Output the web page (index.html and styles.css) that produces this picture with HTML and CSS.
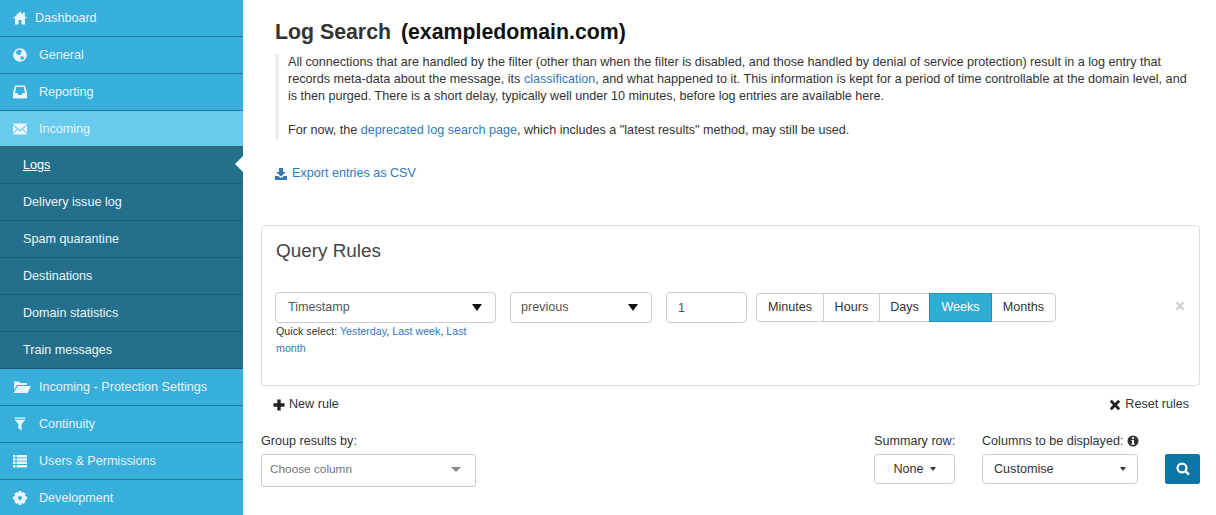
FILE: index.html
```html
<!DOCTYPE html>
<html lang="en">
<head>
    <meta charset="UTF-8">
    <meta name="viewport" content="width=device-width, initial-scale=1.0">
    <title>Log Search</title>
    <link rel="stylesheet" href="styles.css">
</head>
<body>
    <div class="page">
        <nav class="sidebar">
            <a class="nav-item nav-first" href="#">
                <svg class="nav-icon" viewBox="0 0 14 14"><path d="M7 .5 L0 7.200 L2 7.200 L2 13.500 L5.500 13.500 L5.500 9 L8.500 9 L8.500 13.500 L12 13.500 L12 7.200 L14 7.200 L11.800 5 L11.800 1.500 L10 1.500 L10 3.400 Z"/></svg>
                Dashboard
            </a>
            <a class="nav-item" href="#">
                <svg class="nav-icon" viewBox="0 0 14 14"><path fill-rule="evenodd" d="M7 .2a6.800 6.800 0 1 0 0 13.600 6.800 6.800 0 0 0 0-13.600zM4.500 2.200 L7.500 1.800 L9 3.200 L7.500 4.500 L8 6 L6 7.200 L4 6.200 L2.500 4.500 Z M7.500 8.200 L10.500 8.700 L11.500 10 L9.500 12 L7.500 11 Z"/></svg>
                General
            </a>
            <a class="nav-item" href="#">
                <svg class="nav-icon" viewBox="0 0 14 14"><path fill-rule="evenodd" d="M3 .5 L11 .5 C12 .5 12.300 1 12.500 1.700 L14 8 L14 12.500 C14 13.200 13.500 13.500 13 13.500 L1 13.500 C.5 13.500 0 13.200 0 12.500 L0 8 L1.500 1.700 C1.700 1 2 .5 3 .5 Z M3.200 2 L2 8 L4.500 8 L5.500 10 L8.500 10 L9.500 8 L12 8 L10.800 2 Z"/></svg>
                Reporting
            </a>
            <a class="nav-item nav-open" href="#">
                <svg class="nav-icon" viewBox="0 0 14 14"><path d="M0 1.500 L14 1.500 L14 2.200 L7 8 L0 2.200 Z M0 3.500 L0 11 L4 6.800 Z M14 3.500 L14 11 L10 6.800 Z M0 12.500 L0 12 L4.800 7.600 L7 9.500 L9.200 7.600 L14 12 L14 12.500 Z"/></svg>
                Incoming
            </a>
            <div class="subnav">
                <a class="sub-item sub-current" href="#">Logs</a>
                <a class="sub-item" href="#">Delivery issue log</a>
                <a class="sub-item" href="#">Spam quarantine</a>
                <a class="sub-item" href="#">Destinations</a>
                <a class="sub-item" href="#">Domain statistics</a>
                <a class="sub-item" href="#">Train messages</a>
            </div>
            <a class="nav-item" href="#">
                <svg class="nav-icon nav-icon-wide" viewBox="0 0 18 14"><path d="M1 1.500 L6 1.500 L7 3 L14 3 L14 5 L4 5 L1 10 Z M4.800 6 L18 6 L14.500 13 L0.500 13 Z"/></svg>
                Incoming - Protection Settings
            </a>
            <a class="nav-item" href="#">
                <svg class="nav-icon" viewBox="0 0 14 14"><path d="M1.500 .5 L12.500 .5 L12.500 1.700 L1.500 1.700 Z M1.500 2.700 L12.500 2.700 L8.600 7 L8.600 13.500 L5.400 11.500 L5.400 7 Z"/></svg>
                Continuity
            </a>
            <a class="nav-item" href="#">
                <svg class="nav-icon" viewBox="0 0 14 14"><path d="M0 1h2.500v2.500H0zM3.500 1H14v2.500H3.500zM0 4.300h2.500v2.500H0zM3.500 4.300H14v2.500H3.500zM0 7.600h2.500v2.500H0zM3.500 7.600H14v2.500H3.500zM0 10.900h2.500v2.500H0zM3.500 10.900H14v2.500H3.500z"/></svg>
                Users &amp; Permissions
            </a>
            <a class="nav-item" href="#">
                <svg class="nav-icon" viewBox="0 0 14 14"><path fill-rule="evenodd" d="M5.600 0 L8.400 0 L8.800 2 L10.600 1 L12.800 3.200 L11.800 5 L14 5.600 L14 8.400 L11.800 9 L12.800 10.800 L10.600 13 L8.800 12 L8.400 14 L5.600 14 L5.200 12 L3.400 13 L1.200 10.800 L2.200 9 L0 8.400 L0 5.600 L2.200 5 L1.200 3.200 L3.400 1 L5.200 2 Z M7 5 a2 2 0 1 0 0 4 a2 2 0 1 0 0-4z"/></svg>
                Development
            </a>
        </nav>

        <main class="content">
            <h1 class="page-title">Log Search <span class="domain">(exampledomain.com)</span></h1>
            <blockquote class="intro">
                <p>All connections that are handled by the filter (other than when the filter is disabled, and those handled by denial of service protection) result in a log entry that records meta-data about the message, its <a href="#">classification</a>, and what happened to it. This information is kept for a period of time controllable at the domain level, and is then purged. There is a short delay, typically well under 10 minutes, before log entries are available here.</p>
                <p>For now, the <a href="#">deprecated log search page</a>, which includes a "latest results" method, may still be used.</p>
            </blockquote>
            <a class="export-link" href="#">
                <svg class="icon-export" viewBox="0 0 12 12"><path d="M4 0 L8 0 L8 4 L11 4 L6 8.500 L1 4 L4 4 Z M0 8 L3 8 L6 10 L9 8 L12 8 L12 12 L0 12 Z"/></svg>
                Export entries as CSV
            </a>

            <section class="panel">
                <h2 class="panel-title">Query Rules</h2>
                <div class="rule-row">
                    <div class="rule-field">
                        <div class="select select-field">Timestamp<span class="arrow"></span></div>
                        <p class="quick-select">Quick select: <a href="#">Yesterday</a>, <a href="#">Last week</a>, <a href="#">Last month</a></p>
                    </div>
                    <div class="select select-op">previous<span class="arrow"></span></div>
                    <input class="number-input" type="text" value="1">
                    <div class="btn-group">
                        <button class="unit">Minutes</button>
                        <button class="unit">Hours</button>
                        <button class="unit">Days</button>
                        <button class="unit unit-active">Weeks</button>
                        <button class="unit">Months</button>
                    </div>
                    <span class="rule-remove">
                        <svg viewBox="0 0 10 10"><path d="M2.200 .8 L5 3.600 L7.800 .8 L9.200 2.200 L6.400 5 L9.200 7.800 L7.800 9.200 L5 6.400 L2.200 9.200 L.8 7.800 L3.600 5 L.8 2.200 Z"/></svg>
                    </span>
                </div>
            </section>

            <div class="rule-actions">
                <a class="action" href="#">
                    <svg class="action-icon" viewBox="0 0 12 12"><path d="M4.300 0.500h3.400v3.800h3.800v3.400H7.700v3.800H4.300V7.700H.5V4.300h3.800z"/></svg>
                    New rule
                </a>
                <a class="action" href="#">
                    <svg class="action-icon" viewBox="0 0 12 12"><path d="M2.800 .8 L6 4 L9.200 .8 L11.200 2.800 L8 6 L11.200 9.200 L9.200 11.200 L6 8 L2.800 11.200 L.8 9.200 L4 6 L.8 2.800 Z"/></svg>
                    Reset rules
                </a>
            </div>

            <div class="options">
                <div class="option option-group">
                    <label class="option-label">Group results by:</label>
                    <div class="choose">Choose column<span class="choose-arrow"></span></div>
                </div>
                <div class="option option-summary">
                    <label class="option-label">Summary row:</label>
                    <button class="drop drop-none">None<span class="caret"></span></button>
                </div>
                <div class="option option-columns">
                    <label class="option-label">Columns to be displayed:
                        <svg class="info-icon" viewBox="0 0 12 12"><path fill-rule="evenodd" d="M6 .5a5.500 5.500 0 1 0 0 11 5.500 5.500 0 0 0 0-11zM5 2.300h2v1.800H5zM4.500 5h2.500v3.800h.7v1H4.300v-1H5V6H4.500z"/></svg>
                    </label>
                    <button class="drop drop-columns">Customise<span class="caret"></span></button>
                </div>
                <button class="search-btn">
                    <svg viewBox="0 0 14 14"><path fill-rule="evenodd" d="M6 .5a5.500 5.500 0 1 0 3 10.100l3 3 1.800-1.800-3-3A5.500 5.500 0 0 0 6 .5zm0 2.200a3.300 3.300 0 1 1 0 6.600 3.300 3.300 0 0 1 0-6.600z"/></svg>
                </button>
            </div>
        </main>
    </div>
</body>
</html>
```

FILE: styles.css
```css
body {
    font-family: "Liberation Sans", Arial, sans-serif;
    font-size: 12.6px;
    line-height: 17px;
    color: #333;
    background-color: #fff;
    margin: 0;
}
a {
    color: #337ab7;
    text-decoration: none;
}
.page {
    display: flex;
    height: 515px;
    overflow: hidden;
}

/* sidebar */
.sidebar {
    width: 243px;
    flex-shrink: 0;
    background-color: #38aedb;
}
.nav-item {
    display: flex;
    align-items: center;
    height: 36px;
    padding-left: 13px;
    border-bottom: 1px solid #1a7a9e;
    color: #e6f4fa;
    font-size: 12.6px;
}
.nav-first {
    gap: 8px;
}
.nav-icon {
    width: 14px;
    height: 14px;
    margin-right: 12px;
    fill: #e8f5fa;
}
.nav-first .nav-icon {
    margin-right: 0;
}
.nav-icon-wide {
    width: 18px;
    margin-right: 8px;
}
.nav-open {
    height: 34px;
    padding-top: 1px;
    background-color: #67cbee;
    border-bottom-color: #3a5f6e;
}
.subnav {
    background-color: #246f8b;
}
.sub-item {
    display: flex;
    align-items: center;
    position: relative;
    height: 36px;
    padding-left: 23px;
    border-bottom: 1px solid #1c5d75;
    color: #eef6f9;
    font-size: 12.6px;
}
.sub-current {
    color: #fff;
    text-decoration: underline;
}
.sub-current::after {
    content: "";
    position: absolute;
    right: 0;
    top: 9px;
    border: 8px solid transparent;
    border-right-color: #fff;
    border-left-width: 0;
}

/* main column */
.content {
    flex: 1;
    padding: 0 16px 0 18px;
}
.page-title {
    margin: 20px 0 0 14px;
    font-size: 21.3px;
    line-height: 24px;
    font-weight: bold;
    color: #333;
}
.domain {
    margin-left: 4px;
    color: #111;
}
.intro {
    margin: 10px 0 0 14px;
    padding: 0 8px 0 9px;
    border-left: 4px solid #eee;
}
.intro p {
    margin: 0 0 17px;
}
.intro p:last-child {
    margin-bottom: 0;
}
.export-link {
    display: flex;
    align-items: center;
    gap: 5px;
    margin: 26px 0 0 14px;
}
.icon-export {
    width: 12px;
    height: 12px;
    fill: #337ab7;
}

/* query rules panel */
.panel {
    height: 159px;
    margin-top: 43px;
    padding: 0 13px;
    border: 1px solid #ddd;
    border-radius: 4px;
}
.panel-title {
    margin: 14px 0 0 1px;
    font-size: 18.9px;
    line-height: 22px;
    font-weight: normal;
    color: #444;
}
.rule-row {
    display: flex;
    align-items: flex-start;
    margin-top: 30px;
}
.rule-field {
    width: 221px;
    margin-right: 14px;
}
.select {
    display: flex;
    align-items: center;
    justify-content: space-between;
    box-sizing: border-box;
    height: 31px;
    padding: 0 13px 0 12px;
    border: 1px solid #ccc;
    border-radius: 4px;
    color: #555;
}
.select-op {
    width: 142px;
    padding-left: 10px;
    flex-shrink: 0;
}
.arrow {
    border-top: 7px solid #111;
    border-left: 5px solid transparent;
    border-right: 5px solid transparent;
}
.quick-select {
    margin: 0 0 0 1px;
    font-size: 10.7px;
    color: #333;
}
.number-input {
    box-sizing: border-box;
    width: 81px;
    height: 31px;
    margin-left: 14px;
    padding: 0 11px;
    border: 1px solid #ccc;
    border-radius: 4px;
    font: 12.6px "Liberation Sans", Arial, sans-serif;
    color: #555;
}
.btn-group {
    display: flex;
    margin: 1px 0 0 9px;
}
.unit {
    height: 29px;
    padding: 0 10.5px 2px;
    margin-left: -1px;
    border: 1px solid #ccc;
    background-color: #fff;
    font: 12.6px "Liberation Sans", Arial, sans-serif;
    color: #333;
}
.unit:first-child {
    margin-left: 0;
    padding: 0 11px 2px;
    border-radius: 4px 0 0 4px;
}
.unit:last-child {
    padding: 0 11px 2px;
    border-radius: 0 4px 4px 0;
}
.unit-active {
    padding: 0 11px 2px;
    background-color: #2fadd4;
    border-color: #2590b2;
    color: #fff;
    position: relative;
}
.rule-remove {
    margin: 9px 1px 0 auto;
    line-height: 0;
}
.rule-remove svg {
    width: 10px;
    height: 10px;
    fill: #ccc;
}

/* actions under the panel */
.rule-actions {
    display: flex;
    justify-content: space-between;
    margin-top: 10px;
    padding: 0 11px 0 12px;
}
.action {
    display: flex;
    align-items: center;
    gap: 4px;
    color: #333;
}
.action-icon {
    width: 12px;
    height: 12px;
    fill: #222;
}

/* bottom options */
.options {
    display: flex;
    align-items: flex-start;
    margin-top: 20px;
}
.option-label {
    display: block;
    margin-bottom: 4px;
    white-space: nowrap;
}
.option-group {
    width: 215px;
    margin-right: auto;
}
.option-summary {
    width: 81px;
    margin-right: 27px;
}
.option-columns {
    width: 156px;
    margin-right: 27px;
}
.choose {
    display: flex;
    align-items: center;
    justify-content: space-between;
    box-sizing: border-box;
    height: 33px;
    padding: 0 14px 2px 8px;
    border: 1px solid #ccc;
    border-radius: 3px;
    font-size: 11.8px;
    color: #757575;
}
.choose-arrow {
    border-top: 5px solid #888;
    border-left: 5px solid transparent;
    border-right: 5px solid transparent;
}
.drop {
    display: flex;
    align-items: center;
    box-sizing: border-box;
    width: 100%;
    height: 30px;
    border: 1px solid #ccc;
    border-radius: 4px;
    background-color: #fff;
    font: 12.6px "Liberation Sans", Arial, sans-serif;
    color: #333;
}
.drop-none {
    justify-content: center;
    gap: 6px;
}
.drop-columns {
    justify-content: space-between;
    padding: 0 11px;
}
.caret {
    border-top: 4px solid #333;
    border-left: 3.500px solid transparent;
    border-right: 3.500px solid transparent;
}
.info-icon {
    width: 12px;
    height: 12px;
    vertical-align: -2px;
    fill: #333;
}
.search-btn {
    width: 35px;
    height: 30px;
    margin-top: 21px;
    padding: 0;
    border: 1px solid #0b76a6;
    border-radius: 2px;
    background-color: #0b76a6;
    line-height: 0;
}
.search-btn svg {
    width: 14px;
    height: 14px;
    fill: #fff;
}
```
